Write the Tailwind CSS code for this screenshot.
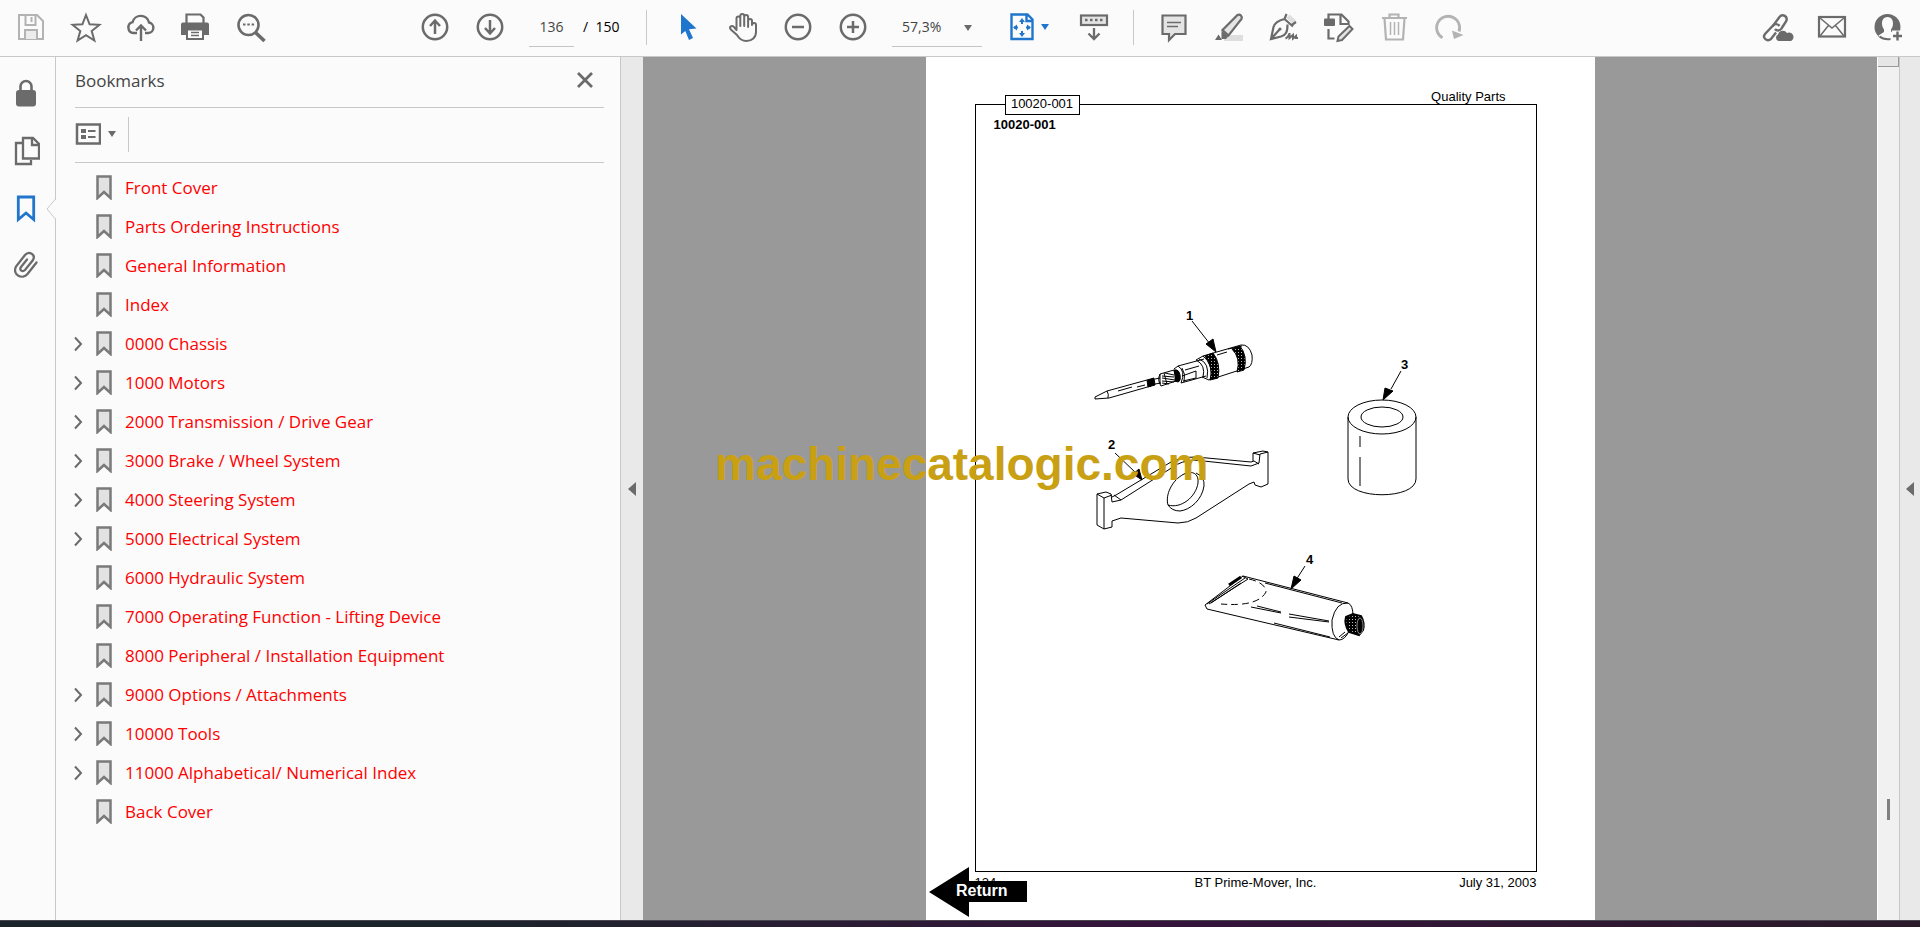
<!DOCTYPE html>
<html lang="en">
<head>
    <meta charset="UTF-8">
    <meta name="viewport" content="width=device-width, initial-scale=1.0">
    <title>10020-001 - Parts Catalog</title>
    <script src="https://cdn.jsdelivr.net/npm/@tailwindcss/browser@4"></script>
</head>
<body class="h-screen flex flex-col overflow-hidden bg-[#fbfbfb] text-[#444] font-['Open_Sans','Noto_Sans',sans-serif]">

    <!-- Shared icons -->
    <svg class="hidden">
        <symbol id="bookmark" viewBox="0 0 16 25">
            <path d="M1.5 1.5h13v21.500l-6.500-6-6.500 6z" fill="#e2e2e2" stroke="#7a7a7a" stroke-width="2.500"/>
        </symbol>
        <symbol id="chevron" viewBox="0 0 10 16">
            <path d="M2 1.500l6 6.500-6 6.500" fill="none" stroke="#6b6b6b" stroke-width="2"/>
        </symbol>
    </svg>

    <!-- Toolbar -->
    <header class="h-[57px] shrink-0 flex items-center border-b border-[#c8c8c8] pl-[3px] pr-[5px] pb-[2px] text-[#6b6b6b]">
        <button class="w-[55px] flex justify-center" aria-label="Save">
            <svg class="w-8 h-[34px]" viewBox="0 0 32 34" fill="none" stroke="#b3b3b3" stroke-width="2">
                <path d="M4 5h18l6 6v18H4z"/>
                <path d="M10.500 5v10h10V5M16.500 7v5"/>
                <path d="M10 29v-9h12v9" fill="#ececec"/>
            </svg>
        </button>
        <button class="w-[55px] flex justify-center" aria-label="Star">
            <svg class="w-8 h-[34px]" viewBox="0 0 32 34" fill="none" stroke="currentColor" stroke-width="2">
                <path d="M16 5l3.600 9.300 9.900.500-7.800 6.200 2.700 9.600L16 25.200l-8.400 5.400 2.700-9.600-7.800-6.200 9.900-.500z"/>
            </svg>
        </button>
        <button class="w-[55px] flex justify-center" aria-label="Upload">
            <svg class="w-8 h-[34px]" viewBox="0 0 32 34" fill="none" stroke="currentColor" stroke-width="2.400">
                <path d="M12 23H8.500a5.500 5.500 0 0 1-1-10.800A8.500 8.500 0 0 1 24 12.500 5.300 5.300 0 0 1 23.500 23H20"/>
                <path d="M16 31V16M11 20.500l5-5 5 5"/>
            </svg>
        </button>
        <button class="w-[55px] flex justify-center" aria-label="Print">
            <svg class="w-8 h-[34px]" viewBox="0 0 32 34">
                <path d="M6.500 13V4.500h14l3 3V13" fill="none" stroke="currentColor" stroke-width="2.200"/>
                <path d="M1 14.500a2 2 0 0 1 2-2h24a2 2 0 0 1 2 2V25H1z" fill="currentColor"/>
                <path d="M7 19.500h16V29H7z" fill="#fff" stroke="currentColor" stroke-width="2"/>
                <path d="M11 22.500h8M11 25.500h8" stroke="currentColor" stroke-width="1.500"/>
            </svg>
        </button>
        <button class="w-[55px] flex justify-center" aria-label="Find">
            <svg class="w-8 h-[34px]" viewBox="0 0 32 34" fill="none" stroke="currentColor">
                <circle cx="13.500" cy="15" r="10" stroke-width="2.600"/>
                <path d="M20.500 22.500l9 8.500" stroke-width="3.600"/>
                <path d="M8 14.500h2.500M12.300 14.500h2.500M16.600 14.500h2.500" stroke-width="2.200"/>
            </svg>
        </button>

        <button class="ml-[129px] w-[55px] flex justify-center" aria-label="Previous page">
            <svg class="w-8 h-[34px]" viewBox="0 0 32 34" fill="none" stroke="currentColor" stroke-width="2.500">
                <circle cx="16" cy="17" r="12.200"/>
                <path d="M16 24V11M11 16l5-5.500 5 5.500"/>
            </svg>
        </button>
        <button class="w-[55px] flex justify-center" aria-label="Next page">
            <svg class="w-8 h-[34px]" viewBox="0 0 32 34" fill="none" stroke="currentColor" stroke-width="2.500">
                <circle cx="16" cy="17" r="12.200"/>
                <path d="M16 10v13M11 18l5 5.500 5-5.500"/>
            </svg>
        </button>
        <input type="text" value="136" aria-label="Page number" class="ml-3 w-[45px] h-9 mt-1 pb-1 border-b border-[#c4c4c4] text-center text-sm text-[#444]">
        <span class="ml-[9px] w-[39px] text-sm text-black whitespace-pre">/  150</span>
        <span class="ml-6 w-px h-[35px] bg-[#c8c8c8]"></span>

        <button class="ml-[13px] w-[55px] flex justify-center" aria-label="Select">
            <svg class="w-8 h-[34px]" viewBox="0 0 32 34">
                <path d="M9 4l15.500 14.500-7.500.700 4 8.800-4 2-3.700-9L9 24.500z" fill="#2076cc"/>
            </svg>
        </button>
        <button class="w-[55px] flex justify-center" aria-label="Pan">
            <svg class="w-8 h-[34px]" viewBox="0 0 32 34" fill="none" stroke="currentColor" stroke-width="2" stroke-linejoin="round" stroke-linecap="round">
                <path d="M9.500 20V8.500a1.900 1.900 0 0 1 3.800 0V16M13.300 16V6a1.900 1.900 0 0 1 3.900 0v9.500M17.200 16V7a1.900 1.900 0 0 1 3.900 0v10M21.100 17v-6a1.900 1.900 0 0 1 3.900 0M25 15v-4M25 15a2 2 0 0 1 4 0v7c0 5.500-4 9-9.500 9-5 0-7.500-2.500-9.500-6L3.800 19.500c-2-3 1-4.500 3-2.700L9.500 20"/>
            </svg>
        </button>
        <button class="w-[55px] flex justify-center" aria-label="Zoom out">
            <svg class="w-8 h-[34px]" viewBox="0 0 32 34" fill="none" stroke="currentColor" stroke-width="2.500">
                <circle cx="16" cy="17" r="12.200"/>
                <path d="M10 17h12"/>
            </svg>
        </button>
        <button class="w-[55px] flex justify-center" aria-label="Zoom in">
            <svg class="w-8 h-[34px]" viewBox="0 0 32 34" fill="none" stroke="currentColor" stroke-width="2.500">
                <circle cx="16" cy="17" r="12.200"/>
                <path d="M10 17h12M16 11v12"/>
            </svg>
        </button>
        <div class="relative ml-3 w-[90px]">
            <select aria-label="Zoom level" class="appearance-none w-full h-9 mt-1 pb-1 pl-[10px] border-b border-[#c4c4c4] text-sm text-[#444]">
                <option>57,3%</option>
            </select>
            <svg class="absolute right-[10px] top-[18px] w-2 h-[6px]" viewBox="0 0 8 6"><path d="M0 0h8L4 6z" fill="#6b6b6b"/></svg>
        </div>
        <button class="ml-6 w-[60px] flex items-center gap-[3px]" aria-label="Fit page">
            <svg class="w-8 h-[34px]" viewBox="0 0 32 34" fill="none" stroke="#2076cc" stroke-width="2.400">
                <path d="M5.500 4.500h16l5 5V29h-21zM20.500 5v6H26"/>
                <path d="M8 17.500h4M20 17.500h4M16 10v4M16 21v4" stroke-width="2"/>
                <path d="M13 12l3-4 3 4zM13 23l3 4 3-4zM11 14.500l-4 3 4 3zM21 14.500l4 3-4 3z" fill="#2076cc" stroke="none"/>
            </svg>
            <svg class="w-2 h-[6px]" viewBox="0 0 8 6"><path d="M0 0h8L4 6z" fill="#2076cc"/></svg>
        </button>
        <button class="w-[55px] flex justify-center" aria-label="Scroll mode">
            <svg class="w-8 h-[34px]" viewBox="0 0 32 34" fill="none" stroke="currentColor">
                <rect x="3" y="5.500" width="26" height="9.500" fill="#e4e4e4" stroke-width="2.200"/>
                <path d="M7 10h18" stroke-width="2.500" stroke-dasharray="2.500 2.500"/>
                <path d="M16 18v11M10.500 23.500L16 29l5.500-5.500" stroke-width="2.300"/>
            </svg>
        </button>
        <span class="ml-3 w-px h-[35px] bg-[#c8c8c8]"></span>

        <button class="ml-3 w-[55px] flex justify-center" aria-label="Comment">
            <svg class="w-8 h-[34px]" viewBox="0 0 32 34" fill="none" stroke="currentColor">
                <path d="M4.500 5.500h23V24H17l-6 6v-6H4.500z" fill="#e4e4e4" stroke-width="2.200"/>
                <path d="M9 12.500h14M9 16.500h11" stroke-width="1.500"/>
            </svg>
        </button>
        <button class="w-[55px] flex justify-center" aria-label="Highlight">
            <svg class="w-8 h-[34px]" viewBox="0 0 32 34">
                <path d="M11 25h19v6H11z" fill="#dedede"/>
                <path d="M9.500 20L24.500 5a3 3 0 0 1 4 4L15.500 25.500z" fill="#e4e4e4" stroke="currentColor" stroke-width="2.200"/>
                <path d="M8.500 20.500l7 5.500-2.500 3H8.500zM2 30l3.500-5.500L9 30z" fill="currentColor"/>
            </svg>
        </button>
        <button class="w-[55px] flex justify-center" aria-label="Sign">
            <svg class="w-8 h-[34px]" viewBox="0 0 32 34" fill="none" stroke="currentColor" stroke-width="2.200">
                <path d="M18.500 8l3-3.500 7 6.500-4 2.500z" fill="#dedede" stroke="none"/>
                <path d="M18.500 4l-2 5 8.500 7.500M28 12l-5 3.500M16.500 9C11 10.500 6.500 13 5.500 17L3 29l10-2.500c5-1.500 6.500-4.500 6.500-12M3.500 28.500l8-9"/>
                <circle cx="12" cy="19" r="1.600" fill="currentColor" stroke="none"/>
                <path d="M17.500 28.500c2.500-1 4-4.500 4-5.500v5l3.500-3v3.500l3-2.500v2h2" stroke-width="2"/>
            </svg>
        </button>
        <button class="w-[55px] flex justify-center" aria-label="Edit">
            <svg class="w-8 h-[34px]" viewBox="0 0 32 34" fill="none" stroke="currentColor" stroke-width="2.200">
                <rect x="1" y="8.500" width="11" height="7.500" rx="1" fill="currentColor" stroke="none"/>
                <path d="M5.500 9V4.500h13l7 7V14h-8V5M5.500 19v9.500h6"/>
                <path d="M26.500 16l3 3-10.500 11-4.500 1 1-4.500z" fill="#e4e4e4" stroke-width="2"/>
            </svg>
        </button>
        <button class="w-[55px] flex justify-center" aria-label="Delete">
            <svg class="w-8 h-[34px]" viewBox="0 0 32 34" fill="none" stroke="#b3b3b3" stroke-width="2.200">
                <path d="M4 8h25M11.500 8V4.500h9V8M6.500 8.500L8 29.500h17l1.500-21"/>
                <path d="M12.500 12v13M16.500 12v13M20.500 12v13" stroke-width="1.500"/>
            </svg>
        </button>
        <button class="w-[55px] flex justify-center" aria-label="Rotate">
            <svg class="w-8 h-[34px]" viewBox="0 0 32 34">
                <path d="M9.500 27.800A11.500 11.500 0 1 1 26 21.500" fill="none" stroke="#b3b3b3" stroke-width="2.800"/>
                <path d="M19 20.500l11.500 4.500-9.500 4z" fill="#b3b3b3"/>
            </svg>
        </button>

        <button class="ml-auto w-[55px] flex justify-center" aria-label="Share link">
            <svg class="w-8 h-[34px]" viewBox="0 0 32 34" fill="none" stroke="currentColor" stroke-width="2.400">
                <path d="M10.500 16.500l7-9.500c3-4 9-.500 6.500 4.500l-4.500 7c-1.500 2.500-5 2.500-6.500.500"/>
                <path d="M17.500 16c-2-2.500-5-2.500-7 0L3 24c-3 4 2 8 6 5l5-6.500"/>
                <path d="M16.500 31a3.500 3.500 0 0 1-.500-6.500 5 5 0 0 1 9-1.500 4 4 0 0 1 4 8z" fill="currentColor" stroke="none"/>
            </svg>
        </button>
        <button class="w-[55px] flex justify-center" aria-label="Send by email">
            <svg class="w-8 h-[34px]" viewBox="0 0 32 34" fill="none" stroke="currentColor">
                <rect x="2" y="7" width="26" height="19.500" stroke-width="2.200"/>
                <path d="M3 8l12 10L27 8M3 26l8.500-10.500M27 26l-8.500-10.500" stroke-width="1.500"/>
            </svg>
        </button>
        <button class="w-[55px] flex justify-center" aria-label="Account">
            <svg class="w-8 h-[34px]" viewBox="0 0 32 34">
                <circle cx="15.500" cy="17" r="13" fill="currentColor"/>
                <path d="M15.500 7c4 0 5.500 3 5.500 6.500 0 3-1 4.500-2 6v2l3.500 2 2 8H9.500l-3-6 5.500-3.500v-2.500c-1-1.500-2-3-2-6C10 10 11.500 7 15.500 7z" fill="#fbfbfb"/>
                <path d="M7.500 26.500c3 2.500 7 3 11 2.500" fill="none" stroke="currentColor" stroke-width="2"/>
                <path d="M20 20.500h12v12H20z" fill="#fbfbfb"/>
                <path d="M25.500 21.500v9M21 26h9" stroke="currentColor" stroke-width="2.400"/>
            </svg>
        </button>
    </header>

    <main class="flex-1 min-h-0 flex">

        <!-- Side rail -->
        <nav class="relative w-14 shrink-0 border-r border-[#c8c8c8] text-[#6b6b6b] pt-[7px] flex flex-col items-center pr-[3px]">
            <button class="h-[58px] flex items-center" aria-label="Security">
                <svg class="w-7 h-[30px]" viewBox="0 0 28 30">
                    <path d="M8.500 14V8.500a5.500 5.500 0 0 1 11 0V14" fill="none" stroke="currentColor" stroke-width="2.600"/>
                    <rect x="4" y="12" width="20" height="16.500" rx="3" fill="currentColor"/>
                </svg>
            </button>
            <button class="h-[58px] flex items-center" aria-label="Page thumbnails">
                <svg class="w-7 h-[30px]" viewBox="0 0 28 30" fill="none" stroke="currentColor" stroke-width="2.300">
                    <path d="M10 7H4v21h15v-4"/>
                    <path d="M11 2h10l6 6v14.500H11z"/>
                    <path d="M20 2.500V9h6.500"/>
                </svg>
            </button>
            <button class="h-[58px] flex items-center" aria-label="Bookmarks">
                <svg class="w-7 h-[30px]" viewBox="0 0 28 30" fill="none" stroke="#2076cc" stroke-width="2.800">
                    <path d="M6.300 3h15.400v22.500L14 19l-7.700 6.500z"/>
                </svg>
            </button>
            <button class="h-[54px] flex items-center" aria-label="Attachments">
                <svg class="w-7 h-[30px]" viewBox="0 0 28 30" fill="none" stroke="currentColor" stroke-width="2.300" stroke-linecap="round">
                    <path d="M24.500 12.500l-9 11.500c-5 6-15.500 1-11.500-7.500L13 5c4-4.500 11-.5 8 5l-8 10c-2.500 2.500-6 0-4-3l6-7.500"/>
                </svg>
            </button>
            <svg class="absolute -right-px top-[142px] w-[10px] h-5" viewBox="0 0 10 20">
                <path d="M10 0L1 10l9 10z" fill="#fbfbfb"/>
                <path d="M9.500 0L1 10l8.500 10" fill="none" stroke="#c8c8c8"/>
            </svg>
        </nav>

        <!-- Bookmarks panel -->
        <aside class="w-[565px] shrink-0 border-r border-[#c8c8c8] pl-[19px] pr-4">
            <div class="h-[51px] flex items-center justify-between border-b border-[#c8c8c8] pr-[11px] pb-[2px]">
                <h2 class="text-[17px]">Bookmarks</h2>
                <button class="pb-[2px]" aria-label="Close">
                    <svg class="w-4 h-4" viewBox="0 0 16 16"><path d="M1 1l14 14M15 1L1 15" stroke="#6b6b6b" stroke-width="2.800"/></svg>
                </button>
            </div>
            <div class="h-[55px] flex items-center border-b border-[#c8c8c8] pb-[2px]">
                <button class="flex items-center gap-[7px]" aria-label="Options">
                    <svg class="w-[26px] h-[22px]" viewBox="0 0 26 22">
                        <rect x="2" y="1.500" width="23" height="19" fill="none" stroke="#6b6b6b" stroke-width="2.500"/>
                        <path d="M6 6h5v4H6zM6 12h5v4H6z" fill="#6b6b6b"/>
                        <path d="M13 8h7.500M13 14h7.500" stroke="#6b6b6b" stroke-width="2"/>
                    </svg>
                    <svg class="w-2 h-[6px]" viewBox="0 0 8 6"><path d="M0 0h8L4 6z" fill="#6b6b6b"/></svg>
                </button>
                <span class="ml-3 w-px h-[35px] bg-[#c8c8c8]"></span>
            </div>
            <ul class="pt-[5px] -ml-[2px] text-[17px] text-[#f00]">
                <li class="h-[39px] flex items-center pl-[23px]"><svg class="w-4 h-[25px] mr-[13px]"><use href="#bookmark"/></svg><a href="#">Front Cover</a></li>
                <li class="h-[39px] flex items-center pl-[23px]"><svg class="w-4 h-[25px] mr-[13px]"><use href="#bookmark"/></svg><a href="#">Parts Ordering Instructions</a></li>
                <li class="h-[39px] flex items-center pl-[23px]"><svg class="w-4 h-[25px] mr-[13px]"><use href="#bookmark"/></svg><a href="#">General Information</a></li>
                <li class="h-[39px] flex items-center pl-[23px]"><svg class="w-4 h-[25px] mr-[13px]"><use href="#bookmark"/></svg><a href="#">Index</a></li>
                <li class="h-[39px] flex items-center"><button class="w-[23px]" aria-label="Expand"><svg class="w-[10px] h-4"><use href="#chevron"/></svg></button><svg class="w-4 h-[25px] mr-[13px]"><use href="#bookmark"/></svg><a href="#">0000 Chassis</a></li>
                <li class="h-[39px] flex items-center"><button class="w-[23px]" aria-label="Expand"><svg class="w-[10px] h-4"><use href="#chevron"/></svg></button><svg class="w-4 h-[25px] mr-[13px]"><use href="#bookmark"/></svg><a href="#">1000 Motors</a></li>
                <li class="h-[39px] flex items-center"><button class="w-[23px]" aria-label="Expand"><svg class="w-[10px] h-4"><use href="#chevron"/></svg></button><svg class="w-4 h-[25px] mr-[13px]"><use href="#bookmark"/></svg><a href="#">2000 Transmission / Drive Gear</a></li>
                <li class="h-[39px] flex items-center"><button class="w-[23px]" aria-label="Expand"><svg class="w-[10px] h-4"><use href="#chevron"/></svg></button><svg class="w-4 h-[25px] mr-[13px]"><use href="#bookmark"/></svg><a href="#">3000 Brake / Wheel System</a></li>
                <li class="h-[39px] flex items-center"><button class="w-[23px]" aria-label="Expand"><svg class="w-[10px] h-4"><use href="#chevron"/></svg></button><svg class="w-4 h-[25px] mr-[13px]"><use href="#bookmark"/></svg><a href="#">4000 Steering System</a></li>
                <li class="h-[39px] flex items-center"><button class="w-[23px]" aria-label="Expand"><svg class="w-[10px] h-4"><use href="#chevron"/></svg></button><svg class="w-4 h-[25px] mr-[13px]"><use href="#bookmark"/></svg><a href="#">5000 Electrical System</a></li>
                <li class="h-[39px] flex items-center pl-[23px]"><svg class="w-4 h-[25px] mr-[13px]"><use href="#bookmark"/></svg><a href="#">6000 Hydraulic System</a></li>
                <li class="h-[39px] flex items-center pl-[23px]"><svg class="w-4 h-[25px] mr-[13px]"><use href="#bookmark"/></svg><a href="#">7000 Operating Function - Lifting Device</a></li>
                <li class="h-[39px] flex items-center pl-[23px]"><svg class="w-4 h-[25px] mr-[13px]"><use href="#bookmark"/></svg><a href="#">8000 Peripheral / Installation Equipment</a></li>
                <li class="h-[39px] flex items-center"><button class="w-[23px]" aria-label="Expand"><svg class="w-[10px] h-4"><use href="#chevron"/></svg></button><svg class="w-4 h-[25px] mr-[13px]"><use href="#bookmark"/></svg><a href="#">9000 Options / Attachments</a></li>
                <li class="h-[39px] flex items-center"><button class="w-[23px]" aria-label="Expand"><svg class="w-[10px] h-4"><use href="#chevron"/></svg></button><svg class="w-4 h-[25px] mr-[13px]"><use href="#bookmark"/></svg><a href="#">10000 Tools</a></li>
                <li class="h-[39px] flex items-center"><button class="w-[23px]" aria-label="Expand"><svg class="w-[10px] h-4"><use href="#chevron"/></svg></button><svg class="w-4 h-[25px] mr-[13px]"><use href="#bookmark"/></svg><a href="#">11000 Alphabetical/ Numerical Index</a></li>
                <li class="h-[39px] flex items-center pl-[23px]"><svg class="w-4 h-[25px] mr-[13px]"><use href="#bookmark"/></svg><a href="#">Back Cover</a></li>
            </ul>
        </aside>

        <button class="w-[22px] shrink-0 bg-[#e9e9e9] flex items-center justify-center" aria-label="Collapse panel">
            <svg class="w-2 h-[14px]" viewBox="0 0 8 14"><path d="M8 0v14L0 7z" fill="#6b6b6b"/></svg>
        </button>

        <!-- Document -->
        <section class="relative flex-1 bg-[#999] flex justify-center overflow-hidden font-['Liberation_Sans',Arial,sans-serif] text-[13px] leading-4 text-black">
            <article class="w-[669px] shrink-0 bg-white pl-[49px] pr-[58px] pt-8">
                <div class="h-[15px] flex justify-end pr-[31px]">Quality Parts</div>
                <div class="relative h-[768px] border border-black">
                    <div class="absolute left-[29px] -top-[10px] w-[75px] h-5 border border-black bg-white text-center leading-[15px]">10020-001</div>
                    <h1 class="pl-[18px] pt-3 font-bold">10020-001</h1>

                    <svg class="absolute inset-0 w-full h-full" viewBox="975 105 560 766" fill="none" stroke="#000" stroke-width="1">
                        <defs>
                            <pattern id="knurl" width="3" height="3" patternUnits="userSpaceOnUse">
                                <rect width="3" height="3" fill="#000" stroke="none"/>
                                <rect x="1" y="1" width="1" height="1" fill="#bbb" stroke="none"/>
                            </pattern>
                        </defs>

                        <!-- 1: grease gun tip -->
                        <path d="M1191 321l18 23"/>
                        <path d="M1215 352l-10-8 7-5z" fill="#000"/>
                        <path d="M1094 397l12-6 40-11M1094 399l14-1 42-12M1094 397v2M1106 391q2 3 1 7M1117 391l14-4M1136 387l8-2"/>
                        <path d="M1146 380l7-2 1 7-7 2z" fill="#000"/>
                        <path d="M1154 379l5-1M1154 384l6-1M1159 374v10"/>
                        <path d="M1159 374l14-4 2 11-15 5q-4-6-1-12zM1161 376l12 1M1161 378l13 2M1161 381l12 1M1164 373l9 2M1161 383l7 1M1163 373l3 11"/>
                        <path d="M1173 370q5-1 6 5t-2 7l-3-1q1-6-1-11z" fill="#000"/>
                        <path d="M1173 369l4-3 26-7M1180 383l25-7M1177 366q8 5 3 17M1181 368q4 6 2 14M1181 376l14-5v7l-13 3M1184 370l14-4"/>
                        <path d="M1195 360l7-4 38-11q8-1 11 10 1 9-3 12l-40 13-7-3M1195 360q10 5 7 17M1198 359q11 4 8 19M1202 356q10 8 8 23M1216 355l10-3M1227 349l14-3"/>
                        <path d="M1204 356l8-3q8 10 5 25l-8 2q4-12-5-24z" fill="url(#knurl)"/>
                        <path d="M1231 349l8-3q8 10 4 24l-7 2q4-14-5-23z" fill="url(#knurl)"/>

                        <!-- 2: bracket -->
                        <path d="M1114 453l21 20"/>
                        <path d="M1141 480l-9-6 6-5z" fill="#000"/>
                        <path d="M1096 494L1105 492 1110 494 1111 502 1120 500 1172 467Q1180 461 1193 460L1250 466 1258 463 1259 454 1267 452V484L1260 487 1254 485 1253 482 1248 484 1195 518Q1187 523 1177 523L1120 518 1111 521V527L1103 529 1096 525z"/>
                        <path d="M1096 494l7 4 8-3M1103 498v31M1252 453l10-2 5 1M1252 453l7 2M1252 453v8M1111 497l4-2 55-33q10-5 25-5l55 5 3-1 5 3M1113 495l7 5"/>
                        <path d="M1167 505c-3-10 4-25 16-31 9-4 15 0 14 9-2 14-17 26-30 22zM1195 473q9 4 8 13c-2 14-14 24-24 25q-8 0-12-6"/>

                        <!-- 3: bushing -->
                        <path d="M1400 371l-10 18"/>
                        <path d="M1382 400l2-12 8 3z" fill="#000"/>
                        <ellipse cx="1381" cy="417" rx="34" ry="17"/>
                        <ellipse cx="1381" cy="417" rx="21" ry="10"/>
                        <path d="M1347 417v62c0 21 68 21 68 0v-62M1359 436v11M1359 457v29"/>

                        <!-- 4: tube -->
                        <path d="M1304 566l-9 14"/>
                        <path d="M1290 589l3-13 7 4z" fill="#000"/>
                        <path d="M1204 605l38-29 105 27M1241 576l6 3M1204 605l2 4 132 31M1206 604l38-26M1208 604l39-25M1210 603l30-20M1264 583l77 20"/>
                        <path d="M1228 585l12-8" stroke-width="3"/>
                        <path d="M1248 579q17 4 17 13-8 15-45 12" stroke-dasharray="7 4"/>
                        <path d="M1250 607l30 6M1256 606l24 6M1288 614l40 7M1288 617l40 5M1273 623l56 14"/>
                        <path d="M1347 603q-12-1-16 17-1 17 7 20 6 0 10-9M1347 603q5 2 5 13M1338 637l6-5M1340 638l7-5"/>
                        <path d="M1345 617l7-3 8 2q4 7 2 14l-4 5-10-3q-5-8-3-15z" fill="url(#knurl)" stroke-width="2"/>
                        <ellipse cx="1359" cy="626" rx="3" ry="8" fill="#000" stroke="#888"/>

                        <g class="font-bold text-[13px]" fill="#000" stroke="none">
                            <text x="1185" y="320">1</text>
                            <text x="1107" y="449">2</text>
                            <text x="1400" y="369">3</text>
                            <text x="1305" y="564">4</text>
                        </g>
                    </svg>
                </div>
                <footer class="grid grid-cols-3 pt-[3px]">
                    <span>134</span>
                    <span class="text-center">BT Prime-Mover, Inc.</span>
                    <span class="text-right">July 31, 2003</span>
                </footer>
                <!-- Return link lies over the page number -->
                <a href="#" class="absolute left-[286px] top-[810px] w-[98px] h-[50px] flex items-center text-base font-bold text-white">
                    <svg class="absolute inset-0" viewBox="0 0 98 50"><path d="M0 25L40 0v14h58v21H40v15z"/></svg>
                    <span class="relative pl-[27px] pb-[2px]">Return</span>
                </a>
            </article>
            <p class="absolute left-[72px] top-[381px] text-[46px] leading-[52px] font-bold text-[#c9a013]">machinecatalogic.com</p>
        </section>

        <!-- Scroll bar and tools pane handle -->
        <div class="w-[22px] shrink-0 bg-[#f1f1f1] border-l border-white flex flex-col items-center">
            <div class="w-full h-[10px] border-r border-b border-[#999] bg-[#e6e6e6]"></div>
            <div class="mt-auto mb-[100px] w-[3px] h-[21px] bg-[#808080]"></div>
        </div>
        <button class="w-[21px] shrink-0 border-l border-[#c8c8c8] bg-[#e9e9e9] flex items-center justify-center" aria-label="Open tools pane">
            <svg class="w-2 h-[14px]" viewBox="0 0 8 14"><path d="M8 0v14L0 7z" fill="#6b6b6b"/></svg>
        </button>
    </main>

    <div class="h-[7px] shrink-0 border-t border-[#4a4550] bg-linear-to-r from-[#1b232b] from-25% via-[#35133c] via-60% to-[#2a1a2a]"></div>
</body>
</html>
